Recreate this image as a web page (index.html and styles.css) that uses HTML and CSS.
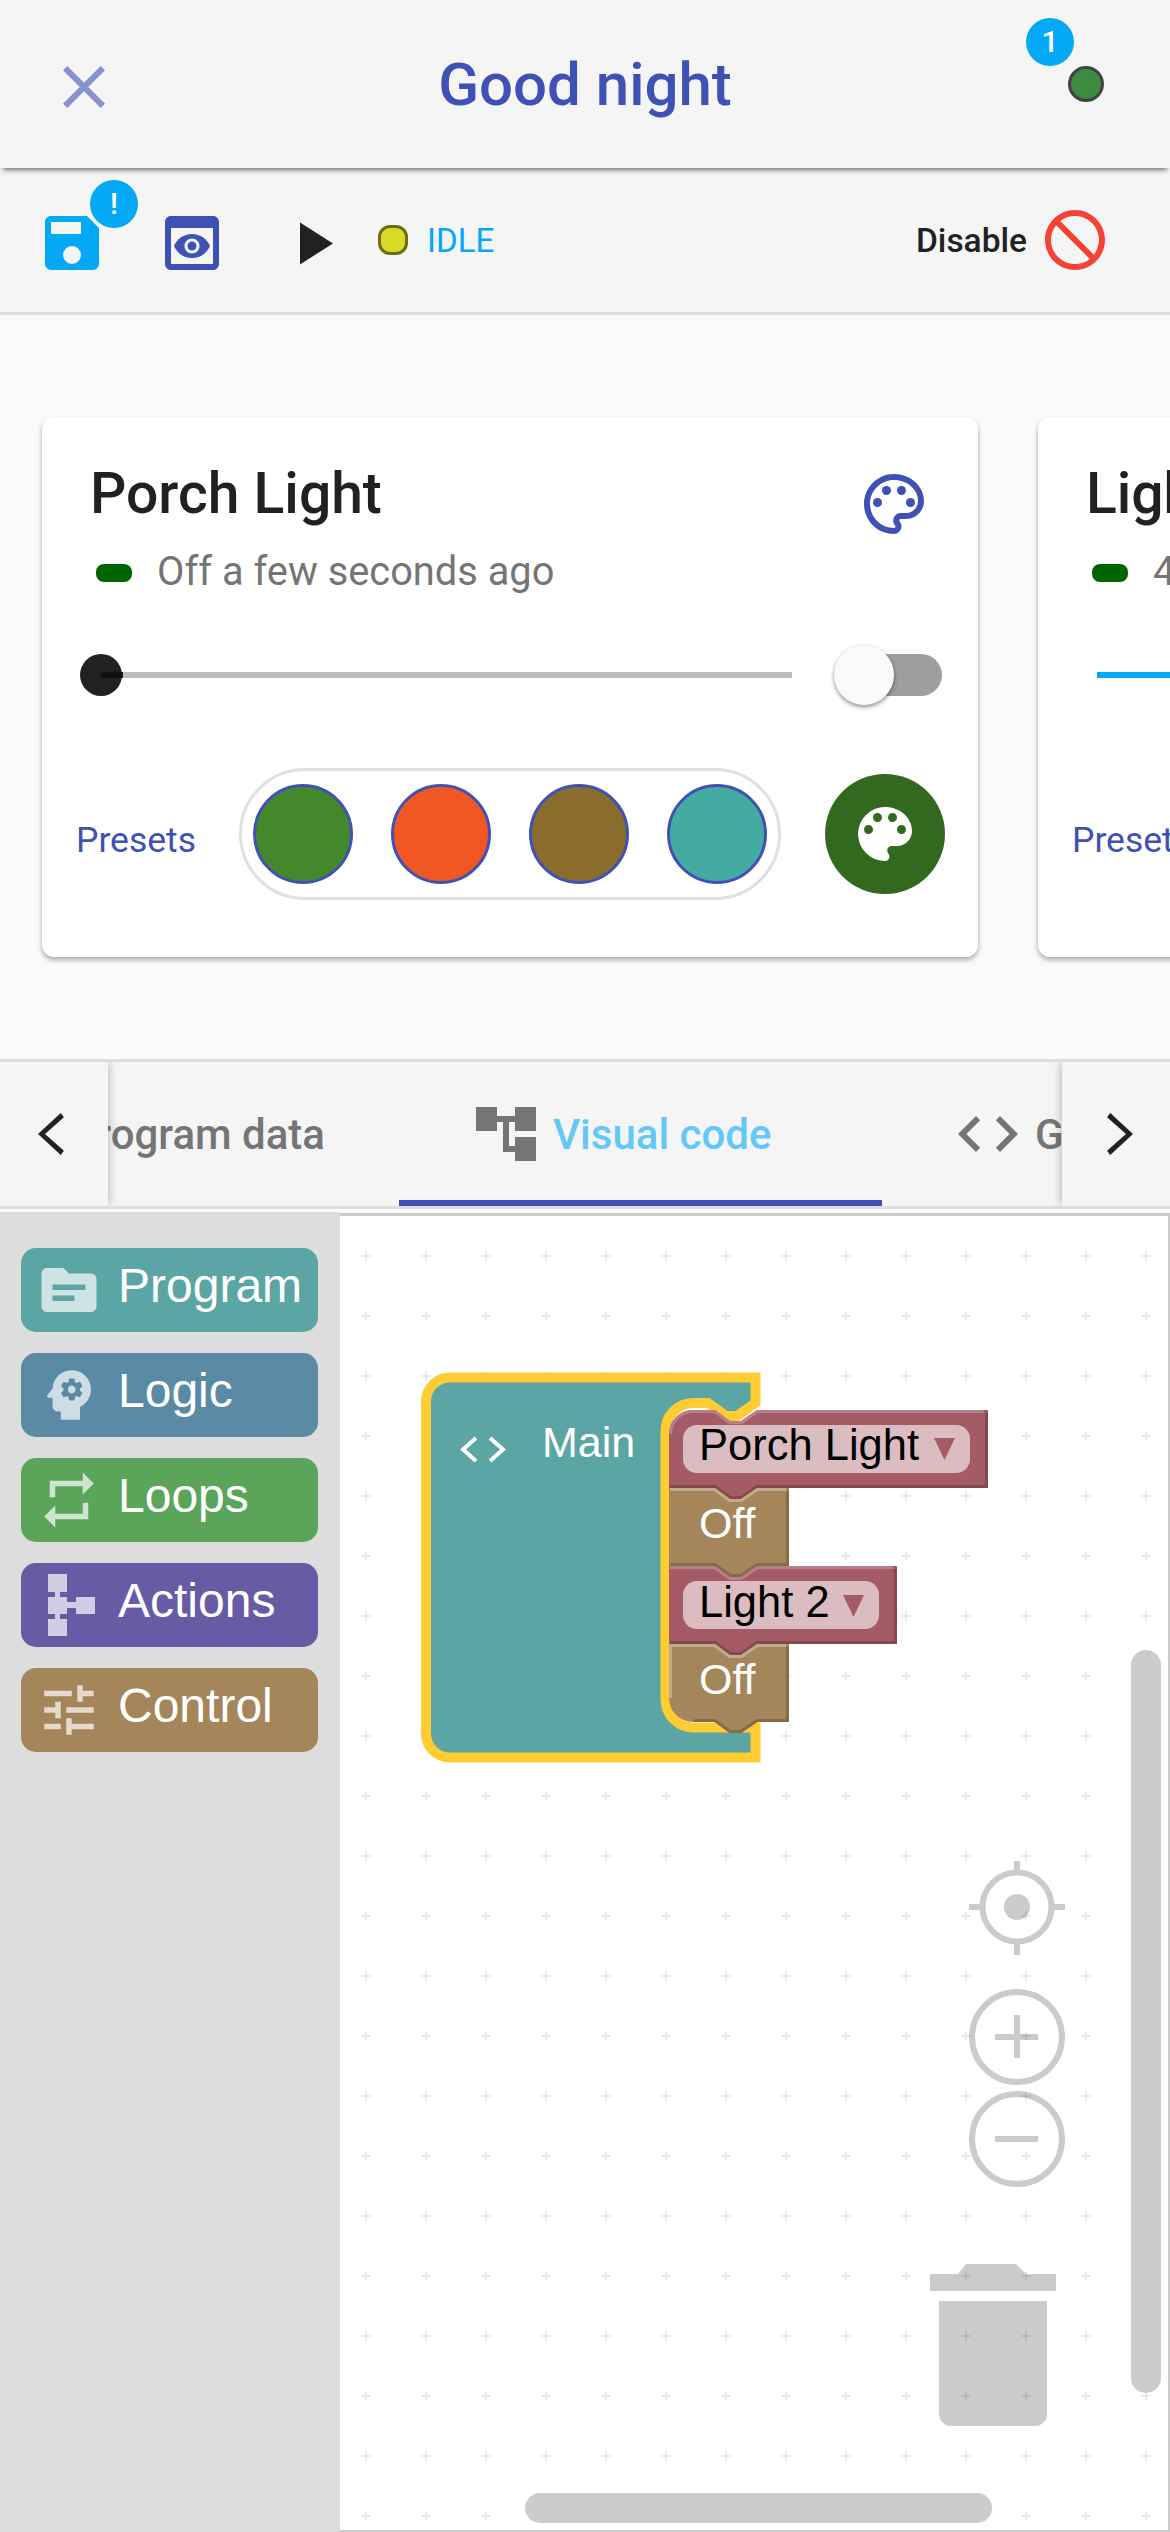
FILE: index.html
```html
<!DOCTYPE html>
<html lang="en">
<head>
    <meta charset="UTF-8">
    <meta name="viewport" content="width=device-width, initial-scale=1.0">
    <title>Good night</title>
    <link rel="stylesheet" href="styles.css">
</head>
<body>
    <header class="app-header">
        <svg class="icon close-icon" viewBox="0 0 24 24"><path d="M19,6.41L17.59,5L12,10.59L6.41,5L5,6.41L10.59,12L5,17.59L6.41,19L12,13.41L17.59,19L19,17.59L13.41,12L19,6.41Z"/></svg>
        <h1 class="app-title">Good night</h1>
        <div class="online-dot"><span class="badge badge-count">1</span></div>
    </header>

    <div class="toolbar">
        <div class="tool tool-save">
            <svg class="icon" viewBox="0 0 24 24"><path d="M15,9H5V5H15M12,19A3,3 0 0,1 9,16A3,3 0 0,1 12,13A3,3 0 0,1 15,16A3,3 0 0,1 12,19M17,3H5C3.89,3 3,3.9 3,5V19A2,2 0 0,0 5,21H19A2,2 0 0,0 21,19V7L17,3Z"/></svg>
            <span class="badge badge-alert">!</span>
        </div>
        <div class="tool tool-preview">
            <svg class="icon" viewBox="0 0 24 24"><path d="M19 3H5c-1.11 0-2 .9-2 2v14c0 1.1.89 2 2 2h14c1.1 0 2-.9 2-2V5c0-1.1-.89-2-2-2zm0 16H5V7h14v12zm-5.5-6c0 .83-.67 1.5-1.5 1.5s-1.5-.67-1.5-1.5.67-1.5 1.5-1.5 1.5.67 1.5 1.5zM12 9c-2.73 0-5.06 1.66-6 4 .94 2.34 3.27 4 6 4s5.06-1.66 6-4c-.94-2.34-3.27-4-6-4zm0 6.5c-1.38 0-2.5-1.12-2.5-2.5s1.12-2.5 2.5-2.5 2.5 1.12 2.5 2.5-1.12 2.5-2.5 2.5z"/></svg>
        </div>
        <div class="tool tool-play">
            <svg class="icon" viewBox="0 0 24 24"><path d="M8,5.14V19.14L19,12.14L8,5.14Z"/></svg>
        </div>
        <span class="idle-dot"></span>
        <span class="idle-text">IDLE</span>
        <span class="disable-text">Disable</span>
        <svg class="icon disable-icon" viewBox="0 0 24 24"><path d="M12 2C17.5 2 22 6.5 22 12S17.5 22 12 22 2 17.5 2 12 6.5 2 12 2M12 4C10.1 4 8.4 4.6 7.1 5.7L18.3 16.9C19.3 15.5 20 13.8 20 12C20 7.6 16.4 4 12 4M16.9 18.3L5.7 7.1C4.6 8.4 4 10.1 4 12C4 16.4 7.6 20 12 20C13.9 20 15.6 19.4 16.9 18.3Z"/></svg>
    </div>

    <section class="devices">
        <div class="card">
            <div class="card-head">
                <h2 class="card-title">Porch Light</h2>
                <svg class="icon palette-outline" viewBox="0 0 24 24">
                    <path d="M12 22C6.49 22 2 17.51 2 12S6.49 2 12 2s10 4.04 10 9c0 3.31-2.69 6-6 6h-1.77c-.28 0-.5.22-.5.5 0 .12.05.23.13.33.41.47.64 1.06.64 1.67A2.5 2.5 0 0 1 12 22zm0-18c-4.41 0-8 3.59-8 8s3.59 8 8 8c.28 0 .5-.22.5-.5a.54.54 0 0 0-.14-.35c-.41-.46-.63-1.05-.63-1.65a2.5 2.5 0 0 1 2.5-2.5H16c2.21 0 4-1.79 4-4 0-3.86-3.59-7-8-7z"/>
                    <circle cx="6.5" cy="11.5" r="1.5"/><circle cx="9.5" cy="7.5" r="1.5"/><circle cx="14.5" cy="7.5" r="1.5"/><circle cx="17.5" cy="11.5" r="1.5"/>
                </svg>
            </div>
            <div class="card-status"><span class="status-pill"></span><span class="status-text">Off a few seconds ago</span></div>
            <div class="card-controls">
                <div class="slider"><span class="slider-thumb"></span><span class="slider-fill"></span></div>
                <div class="toggle"><span class="toggle-thumb"></span></div>
            </div>
            <div class="card-presets">
                <span class="presets-label">Presets</span>
                <div class="presets-pill">
                    <span class="swatch swatch-green"></span>
                    <span class="swatch swatch-orange"></span>
                    <span class="swatch swatch-brown"></span>
                    <span class="swatch swatch-teal"></span>
                </div>
                <div class="palette-btn">
                    <svg class="icon" viewBox="0 0 24 24"><path d="M12,3a9,9 0 0,0 0,18c.83 0 1.5-.67 1.5-1.5 0-.39-.15-.74-.39-1.01-.23-.26-.38-.61-.38-.99 0-.83.67-1.5 1.5-1.5H16c2.76 0 5-2.24 5-5 0-4.42-4.03-8-9-8zm-5.5 9c-.83 0-1.5-.67-1.5-1.5S5.67 9 6.5 9 8 9.67 8 10.5 7.33 12 6.5 12zm3-4C8.67 8 8 7.33 8 6.5S8.67 5 9.5 5s1.5.67 1.5 1.5S10.33 8 9.5 8zm5 0c-.83 0-1.5-.67-1.5-1.5S13.67 5 14.5 5s1.5.67 1.5 1.5S15.33 8 14.5 8zm3 4c-.83 0-1.5-.67-1.5-1.5S16.67 9 17.5 9s1.5.67 1.5 1.5-.67 1.5-1.5 1.5z"/></svg>
                </div>
            </div>
        </div>

        <div class="card">
            <div class="card-head">
                <h2 class="card-title">Light 2</h2>
            </div>
            <div class="card-status"><span class="status-pill"></span><span class="status-text">4 minutes ago</span></div>
            <div class="card-controls">
                <div class="slider slider-on"></div>
            </div>
            <div class="card-presets">
                <span class="presets-label">Presets</span>
            </div>
        </div>
    </section>

    <nav class="tabs">
        <div class="tab-arrow tab-arrow-left">
            <svg class="icon" viewBox="0 0 24 24"><path d="M15.41 7.2L14.5 6L8 12L14.5 18L15.41 16.8L10 12Z"/></svg>
        </div>
        <div class="tab-list">
            <div class="tab tab-first">Program data</div>
            <div class="tab tab-active">
                <svg class="tab-icon" viewBox="0 0 60 54">
                    <path d="M0 0H21V9H39V0H60V24H39V15H33V39H39V30H60V54H39V45H27V15H21V24H0Z"/>
                </svg>
                <span>Visual code</span>
            </div>
            <div class="tab tab-last">
                <svg class="icon" viewBox="0 0 24 24"><path d="M9.4 16.6L4.8 12l4.6-4.6L8 6l-6 6 6 6 1.4-1.4zm5.2 0l4.6-4.6-4.6-4.6L16 6l6 6-6 6-1.4-1.4z"/></svg>
                <span>GPIO</span>
            </div>
        </div>
        <div class="tab-arrow tab-arrow-right">
            <svg class="icon" viewBox="0 0 24 24"><path d="M8.59 7.2L9.5 6L16 12L9.5 18L8.59 16.8L14 12Z"/></svg>
        </div>
    </nav>

    <main class="editor">
        <aside class="toolbox">
            <div class="cat cat-program">
                <svg class="cat-icon" viewBox="0 0 24 24"><path d="M20 6h-8l-2-2H4c-1.1 0-1.99.9-1.99 2L2 18c0 1.1.9 2 2 2h16c1.1 0 2-.9 2-2V8c0-1.1-.9-2-2-2zm-6 10H6v-2h8v2zm4-4H6v-2h12v2z"/></svg>
                <span>Program</span>
            </div>
            <div class="cat cat-logic">
                <svg class="cat-icon" viewBox="0 0 24 24"><path d="M13 8.57c-.79 0-1.43.64-1.43 1.43s.64 1.43 1.43 1.43 1.43-.64 1.43-1.43-.64-1.43-1.43-1.43z"/><path d="M13 3C9.25 3 6.2 5.94 6.02 9.64L4.1 12.2c-.25.33-.01.8.4.8H6v3c0 1.1.9 2 2 2h1v3h7v-4.68c2.36-1.12 4-3.53 4-6.32 0-3.87-3.13-7-7-7zm3 7c0 .13-.01.26-.02.39l.83.66c.08.06.1.16.05.25l-.8 1.39c-.05.09-.16.12-.24.09l-.99-.4c-.21.16-.43.29-.67.39L14 13.83c-.01.1-.1.17-.2.17h-1.6c-.1 0-.18-.07-.2-.17l-.15-1.06c-.25-.1-.47-.23-.68-.39l-.99.4c-.09.03-.2 0-.25-.09l-.8-1.39c-.05-.08-.03-.19.05-.25l.84-.66c-.01-.13-.02-.26-.02-.39s.02-.27.04-.39l-.85-.66c-.08-.06-.1-.16-.05-.26l.8-1.38c.05-.09.15-.12.24-.09l1 .4c.2-.15.43-.29.67-.39L12 6.17c.02-.1.1-.17.2-.17h1.6c.1 0 .18.07.2.17l.15 1.06c.24.1.46.23.67.39l1-.4c.09-.03.2 0 .24.09l.8 1.38c.05.09.03.2-.05.26l-.85.66c.03.12.04.25.04.39z"/></svg>
                <span>Logic</span>
            </div>
            <div class="cat cat-loops">
                <svg class="cat-icon" viewBox="0 0 24 24"><path d="M7 7h10v3l4-4-4-4v3H5v6h2V7zm10 10H7v-3l-4 4 4 4v-3h12v-6h-2v4z"/></svg>
                <span>Loops</span>
            </div>
            <div class="cat cat-actions">
                <svg class="cat-icon" viewBox="0 0 66 66"><path d="M12 2H31V20H24V25H31V30H40V25H59V42H40V36H31V42H24V47H31V64H12V47H19V42H12V25H19V20H12Z"/></svg>
                <span>Actions</span>
            </div>
            <div class="cat cat-control">
                <svg class="cat-icon" viewBox="0 0 24 24"><path d="M3 17v2h6v-2H3zM3 5v2h10V5H3zm10 16v-2h8v-2h-8v-2h-2v6h2zM7 9v2H3v2h4v2h2V9H7zm14 4v-2H11v2h10zm-6-4h2V7h4V5h-4V3h-2v6z"/></svg>
                <span>Control</span>
            </div>
        </aside>

        <div class="workspace">
            <svg class="workspace-canvas" viewBox="340 1216 828 1314">
                <defs>
                    <pattern id="grid" patternUnits="userSpaceOnUse" x="-24" y="26" width="60" height="60">
                        <path class="grid-mark" d="M25.5 30H34.500M30 25.500V34.500"/>
                    </pattern>
                </defs>
                <rect x="340" y="1216" width="828" height="1314" fill="url(#grid)"/>

                <!-- main block, the C shape stays open on the right -->
                <path class="main-block" d="M450 1377.5H755.5V1403L737 1416H726L708 1403H693A28 28 0 0 0 665.5 1431V1700A28 28 0 0 0 693 1727.5H755.5V1757.5H450A24 24 0 0 1 426 1733.5V1401.5A24 24 0 0 1 450 1377.5Z"/>
                <path class="code-mark" d="M476 1438L463 1449.5L476 1461M490 1438L503 1449.5L490 1461"/>
                <text class="block-label" x="542" y="1457">Main</text>

                <!-- Porch Light -->
                <path class="block block-device" d="M669 1434A24 24 0 0 1 693 1410H715L730 1421H741L757 1410H988V1488H757L741 1499H730L715 1488H669Z"/>
                <path class="edge edge-light-red" d="M670.5 1434A22.500 22.500 0 0 1 693 1411.500H714.500L729.500 1422.500H741.500L757.500 1411.500H984"/>
                <path class="edge edge-dark-red" d="M986.500 1413V1486.500H757L741 1497.500H730L715 1486.500H670"/>
                <rect class="field" x="683" y="1425" width="287" height="48" rx="14"/>
                <text class="field-text" x="699" y="1460">Porch Light</text>
                <path class="field-arrow" d="M934 1438H955L944.500 1460Z"/>

                <!-- Off -->
                <path class="block block-state" d="M669 1488H715L730 1499H741L757 1488H789V1566H757L741 1577H730L715 1566H669Z"/>
                <path class="edge edge-light-state" d="M670 1489.500H714.500L729.500 1500.500H741.500L757.500 1489.500H786"/>
                <path class="edge edge-dark-state" d="M787.500 1491V1564.500H757L741 1575.500H730L715 1564.500H670"/>
                <text class="block-label" x="699" y="1538">Off</text>

                <!-- Light 2 -->
                <path class="block block-device" d="M669 1566H715L730 1577H741L757 1566H897V1644H757L741 1655H730L715 1644H669Z"/>
                <path class="edge edge-light-red" d="M670 1567.500H714.500L729.500 1578.500H741.500L757.500 1567.500H893"/>
                <path class="edge edge-dark-red" d="M895.500 1569V1642.500H757L741 1653.500H730L715 1642.500H670"/>
                <rect class="field" x="683" y="1581" width="196" height="48" rx="14"/>
                <text class="field-text" x="699" y="1617">Light 2</text>
                <path class="field-arrow" d="M843 1595H864L853.500 1617Z"/>

                <!-- Off -->
                <path class="block block-state" d="M669 1644H715L730 1655H741L757 1644H789V1722H757L741 1733H730L715 1722H693A24 24 0 0 1 669 1698Z"/>
                <path class="edge edge-light-state" d="M670.500 1698V1645.500H714.500L729.500 1656.500H741.500L757.500 1645.500H786"/>
                <path class="edge edge-dark-state" d="M787.500 1647V1720.500H757L741 1731.500H730L715 1720.500H694"/>
                <text class="block-label" x="699" y="1694">Off</text>

                <!-- centre and zoom controls -->
                <g class="controls">
                    <circle class="ring" cx="1017" cy="1907" r="34.500"/>
                    <path class="ring" d="M1017 1861V1872M1017 1942V1955M969 1907H981M1053 1907H1065"/>
                    <circle class="solid" cx="1017" cy="1907" r="13"/>
                    <circle class="ring" cx="1017" cy="2037" r="45"/>
                    <path class="ring" d="M995 2037H1038M1017 2015V2058"/>
                    <circle class="ring" cx="1017" cy="2139" r="45"/>
                    <path class="ring" d="M995 2139H1038"/>
                    <path class="solid" d="M930 2274H958L966 2264H1016L1026 2274H1056V2291H930ZM939 2301H1047V2414A12 12 0 0 1 1035 2426H951A12 12 0 0 1 939 2414Z"/>
                </g>
            </svg>
            <span class="scrollbar-v"></span>
            <span class="scrollbar-h"></span>
        </div>
    </main>
</body>
</html>
```

FILE: styles.css
```css
html, body {
    margin: 0;
    padding: 0;
}
body {
    width: 1170px;
    height: 2532px;
    overflow: hidden;
    background-color: #fff;
    font-family: Roboto, Arial, sans-serif;
    color: #212121;
}
.icon {
    width: 72px;
    height: 72px;
    flex: none;
    display: block;
    fill: currentColor;
}

/* header */
.app-header {
    position: relative;
    z-index: 2;
    height: 168px;
    display: grid;
    grid-template-columns: 120px 1fr 120px;
    align-items: center;
    background-color: #f5f5f5;
    box-shadow: 0 5px 5px -3px rgba(0, 0, 0, 0.55);
}
.close-icon {
    margin: 6px 0 0 48px;
    color: #3f51b5;
    opacity: 0.6;
}
.app-title {
    margin: 0;
    text-align: center;
    font-size: 60px;
    font-weight: 500;
    color: #3f51b5;
}
.online-dot {
    position: relative;
    justify-self: end;
    box-sizing: border-box;
    width: 36px;
    height: 36px;
    margin-right: 66px;
    border: 3px solid #424242;
    border-radius: 50%;
    background-color: #3d8b40;
}
.badge {
    position: absolute;
    width: 48px;
    height: 48px;
    border-radius: 50%;
    background-color: #03a9f4;
    color: #fff;
    font-size: 30px;
    font-weight: 500;
    line-height: 48px;
    text-align: center;
}
.badge-count {
    left: -45px;
    top: -51px;
}
.badge-alert {
    left: 54px;
    top: -27px;
}

/* toolbar */
.toolbar {
    height: 144px;
    display: flex;
    align-items: center;
    background-color: #f5f5f5;
    border-bottom: 3px solid #ddd;
}
.tool {
    position: relative;
    width: 72px;
    height: 72px;
    margin-top: 6px;
}
.tool-save {
    margin-left: 36px;
    color: #03a9f4;
}
.tool-preview {
    margin-left: 48px;
    color: #3f51b5;
}
.tool-play {
    margin-left: 48px;
}
.idle-dot {
    box-sizing: border-box;
    width: 30px;
    height: 30px;
    margin-left: 30px;
    border: 3px solid #6d6d14;
    border-radius: 12px;
    background-color: #dada2a;
}
.idle-text {
    margin-left: 19px;
    font-size: 33px;
    color: #03a9f4;
}
.disable-text {
    margin-left: auto;
    font-size: 33.5px;
    font-weight: 500;
}
.disable-icon {
    margin: 0 59px 0 12px;
    color: #f44336;
}

/* device cards */
.devices {
    height: 642px;
    padding: 102px 0 0 42px;
    display: flex;
    gap: 60px;
    overflow: hidden;
    background-color: #fafafa;
}
.card {
    flex: none;
    width: 936px;
    height: 540px;
    box-sizing: border-box;
    padding-top: 51px;
    border-radius: 12px;
    background-color: #fff;
    box-shadow: 0 3px 5px rgba(0, 0, 0, 0.32);
}
.card-head {
    height: 72px;
    display: flex;
    align-items: center;
    justify-content: space-between;
    padding: 0 48px 0 48px;
}
.card-title {
    margin: -22px 0 0;
    font-size: 57px;
    font-weight: 500;
    white-space: nowrap;
}
.palette-outline {
    color: #3f51b5;
}
.card-status {
    height: 66px;
    display: flex;
    align-items: center;
    padding-left: 54px;
}
.status-pill {
    width: 36px;
    height: 18px;
    border-radius: 8px;
    background-color: #006400;
}
.status-text {
    margin: -3px 0 0 25px;
    font-size: 39.8px;
    color: #757575;
    white-space: nowrap;
}
.card-controls {
    height: 138px;
    display: flex;
    align-items: center;
    padding-left: 59px;
}
.slider {
    position: relative;
    width: 691px;
    height: 6px;
    background-color: #bdbdbd;
}
.slider-on {
    background-color: #03a9f4;
}
.slider-thumb {
    position: absolute;
    left: -21px;
    top: -18px;
    width: 42px;
    height: 42px;
    border-radius: 50%;
    background-color: #212121;
}
.slider-fill {
    position: absolute;
    left: 0;
    top: 0;
    width: 22px;
    height: 6px;
    background-color: #111;
}
.toggle {
    position: relative;
    width: 84px;
    height: 42px;
    margin-left: 66px;
    border-radius: 21px;
    background-color: #9e9e9e;
}
.toggle-thumb {
    position: absolute;
    left: -24px;
    top: -9px;
    width: 60px;
    height: 60px;
    border-radius: 50%;
    background-color: #fafafa;
    box-shadow: 0 2px 4px rgba(0, 0, 0, 0.45);
}
.card-presets {
    margin-top: 24px;
    height: 132px;
    display: flex;
    align-items: center;
    padding-left: 34px;
}
.presets-label {
    width: 163px;
    flex: none;
    margin-top: 12px;
    font-size: 35.5px;
    color: #3f51b5;
}
.presets-pill {
    box-sizing: border-box;
    width: 542px;
    height: 132px;
    padding: 0 11px;
    display: flex;
    align-items: center;
    justify-content: space-between;
    border: 3px solid #e0e0e0;
    border-radius: 66px;
}
.swatch {
    box-sizing: border-box;
    width: 100px;
    height: 100px;
    border: 3px solid #3f51b5;
    border-radius: 50%;
}
.swatch-green { background-color: #43882b; }
.swatch-orange { background-color: #f15722; }
.swatch-brown { background-color: #8a6d2d; }
.swatch-teal { background-color: #44aba3; }
.palette-btn {
    width: 120px;
    height: 120px;
    margin-left: 44px;
    display: flex;
    align-items: center;
    justify-content: center;
    border-radius: 50%;
    background-color: #33691e;
    color: #fff;
}

/* tabs */
.tabs {
    height: 144px;
    display: flex;
    overflow: hidden;
    background-color: #f5f5f5;
    border-top: 3px solid #ddd;
    border-bottom: 3px solid #ddd;
}
.tab-arrow {
    position: relative;
    z-index: 1;
    width: 108px;
    flex: none;
    display: flex;
    align-items: center;
    justify-content: center;
    background-color: #f5f5f5;
    box-shadow: 0 0 10px rgba(0, 0, 0, 0.3);
}
.tab-arrow .icon {
    width: 84px;
    height: 84px;
}
.tab-arrow-left .icon {
    margin-right: 4px;
}
.tab-arrow-right .icon {
    margin-left: 6px;
}
.tab-list {
    flex: 1;
    display: flex;
    overflow: hidden;
}
.tab {
    flex: none;
    box-sizing: border-box;
    height: 144px;
    display: flex;
    align-items: center;
    font-size: 42px;
    font-weight: 500;
    color: #757575;
    white-space: nowrap;
}
.tab-first {
    width: 291px;
    justify-content: flex-end;
    padding-right: 74px;
}
.tab-active {
    width: 483px;
    padding: 6px 0 0 77px;
    border-bottom: 6px solid #3f51b5;
    color: #62c8f9;
}
.tab-icon {
    width: 60px;
    height: 54px;
    margin-right: 17px;
    fill: #757575;
}
.tab-last {
    padding-left: 70px;
}
.tab-last .icon {
    margin-right: 11px;
}

/* editor */
.editor {
    display: flex;
    height: 1320px;
    margin-top: 3px;
}
.toolbox {
    width: 340px;
    flex: none;
    box-sizing: border-box;
    padding: 36px 22px 0 21px;
    display: flex;
    flex-direction: column;
    gap: 21px;
    background-color: #ddd;
}
.cat {
    height: 84px;
    display: flex;
    align-items: center;
    padding-left: 15px;
    border-radius: 15px;
    color: #fff;
    font-family: "Liberation Sans", Arial, sans-serif;
    font-size: 48px;
}
.cat span {
    padding-bottom: 9px;
}
.cat-icon {
    width: 66px;
    height: 66px;
    margin-right: 16px;
    fill: #fff;
    opacity: 0.7;
}
.cat-program { background-color: #5ba5a5; }
.cat-logic { background-color: #5b8aa5; }
.cat-loops { background-color: #5ba55b; }
.cat-actions { background-color: #675ba5; }
.cat-control { background-color: #a5865b; }

.workspace {
    position: relative;
    flex: 1;
    margin-top: 1px;
    border: solid #ccc;
    border-width: 3px 2px 2px 0;
    overflow: hidden;
    background-color: #fff;
}
.workspace-canvas {
    display: block;
    width: 828px;
    height: 1314px;
}
.grid-mark {
    stroke: #e2e2e2;
    stroke-width: 1.5;
    fill: none;
}
.main-block {
    fill: #5ba5a5;
    stroke: #fc3;
    stroke-width: 10;
}
.code-mark {
    fill: none;
    stroke: #fff;
    stroke-width: 4;
}
.block-label {
    fill: #fff;
    font-family: "Liberation Sans", Arial, sans-serif;
    font-size: 43px;
}
.block-device { fill: #a55b65; }
.block-state { fill: #a5865b; }
.edge {
    fill: none;
    stroke-width: 3;
}
.edge-light-red { stroke: #b97f88; }
.edge-dark-red { stroke: #84494f; }
.edge-light-state { stroke: #c0ab8c; }
.edge-dark-state { stroke: #846b49; }
.field {
    fill: #dbbdc1;
}
.field-text {
    fill: #000;
    font-family: "Liberation Sans", Arial, sans-serif;
    font-size: 43.5px;
}
.field-arrow {
    fill: #a55b65;
}
.controls {
    opacity: 0.2;
}
.controls .ring {
    fill: none;
    stroke: #000;
    stroke-width: 6;
}
.controls .solid {
    fill: #000;
}
.scrollbar-v {
    position: absolute;
    left: 791px;
    top: 434px;
    width: 30px;
    height: 743px;
    border-radius: 15px;
    background-color: #ccc;
}
.scrollbar-h {
    position: absolute;
    left: 185px;
    top: 1277px;
    width: 467px;
    height: 30px;
    border-radius: 15px;
    background-color: #ccc;
}
```
